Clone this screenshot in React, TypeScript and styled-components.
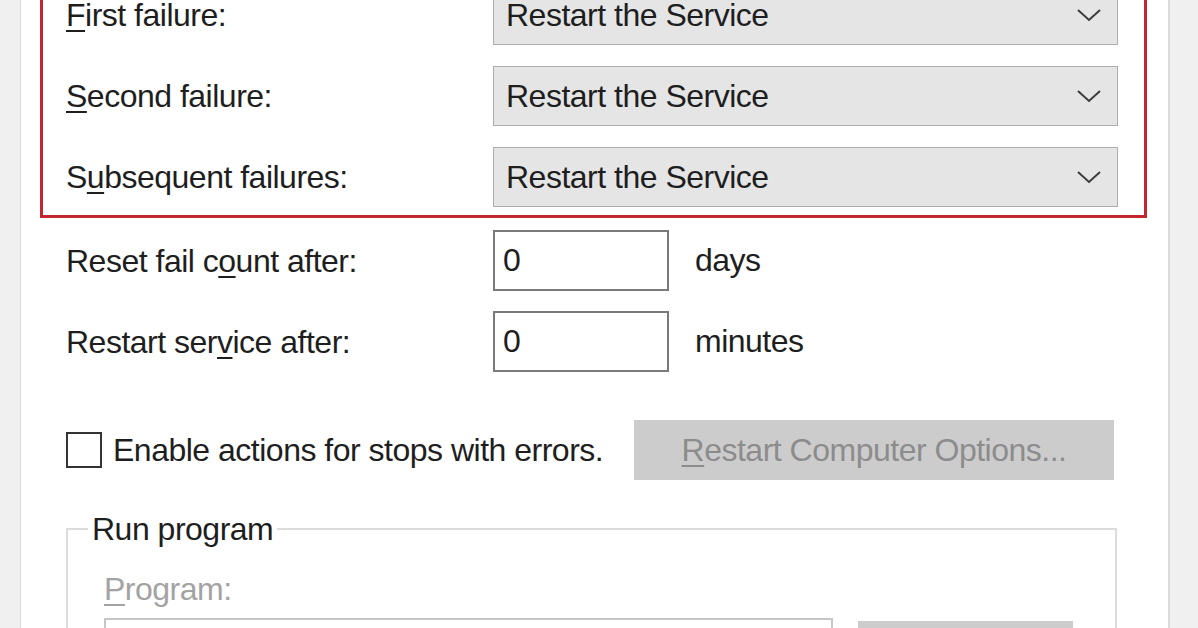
import styled, { createGlobalStyle } from "styled-components";

const GlobalStyle = createGlobalStyle`
    html, body {
        margin: 0;
        padding: 0;
        background: #f0f0f0;
    }
    body {
        font-family: "Liberation Sans", Arial, sans-serif;
        color: #1e1e1e;
    }
`;

const Screen = styled.div`
    width: 1198px;
    height: 628px;
    overflow: hidden;
    background: #f0f0f0;
`;

const TabPage = styled.div`
    margin-left: 20px;
    width: 1150px;
    min-height: 720px;
    box-sizing: border-box;
    background: #fff;
    border-left: 1px solid #d9d9d9;
    border-right: 2px solid #dadada;
    padding: 0 21px 0 19px;
    font-size: 32px;
    letter-spacing: -0.5px;
`;

const RedBox = styled.div`
    margin-top: -30px;
    border: 3px solid #c4262e;
    padding: 12px 26px 8px 23px;
    display: flex;
    flex-direction: column;
    gap: 21px;
`;

const FailureRow = styled.div`
    display: grid;
    grid-template-columns: 427px 1fr;
    align-items: center;
`;

const Label = styled.span<{ $disabled?: boolean }>`
    color: ${(p) => (p.$disabled ? "#a3a3a3" : "#1e1e1e")};
    line-height: 36px;
    white-space: nowrap;
    u {
        text-underline-offset: 4px;
        text-decoration-thickness: 2px;
    }
`;

const Select = styled.div`
    height: 60px;
    box-sizing: border-box;
    border: 1px solid #adadad;
    background: #e5e5e5;
    display: flex;
    align-items: center;
    justify-content: space-between;
    padding: 0 15px 0 12px;
`;

const Settings = styled.div`
    padding-left: 26px;
    padding-top: 12px;
    display: flex;
    flex-direction: column;
    gap: 20px;
`;

const SettingRow = styled.div`
    display: flex;
    align-items: center;
`;

const SettingLabel = styled(Label)`
    width: 427px;
`;

const NumberBox = styled.div`
    width: 176px;
    height: 61px;
    box-sizing: border-box;
    border: 2px solid #7a7a7a;
    padding-left: 8px;
    display: flex;
    align-items: center;
`;

const Unit = styled.span`
    margin-left: 26px;
`;

const OptionsRow = styled.div`
    margin-top: 28px;
    display: flex;
    align-items: center;
`;

const CheckBox = styled.div`
    width: 36px;
    height: 36px;
    box-sizing: border-box;
    border: 2px solid #333;
    background: #fff;
    flex-shrink: 0;
`;

const CheckLabel = styled(Label)`
    margin-left: 11px;
`;

const GrayButton = styled.div<{ $width: number }>`
    width: ${(p) => p.$width}px;
    height: 60px;
    box-sizing: border-box;
    background: #cccccc;
    color: #8c8c8c;
    display: flex;
    align-items: center;
    justify-content: center;
    flex-shrink: 0;
    u {
        text-underline-offset: 4px;
        text-decoration-thickness: 2px;
    }
`;

const OptionsButton = styled(GrayButton)`
    margin-left: auto;
    margin-right: 33px;
`;

const Group = styled.fieldset`
    margin: 11px 30px 0 0;
    padding: 0 0 40px 36px;
    border: 2px solid #dcdcdc;
    min-width: 0;
`;

const Legend = styled.legend`
    margin-left: -16px;
    padding: 0 4px;
    line-height: 36px;
    color: #1e1e1e;
`;

const ProgramLabel = styled(Label)`
    display: block;
    margin-top: 24px;
`;

const ProgramRow = styled.div`
    margin-top: 11px;
    display: flex;
    align-items: flex-start;
`;

const PathBox = styled.div`
    width: 729px;
    height: 60px;
    box-sizing: border-box;
    border: 2px solid #c6c6c6;
    background: #fff;
`;

const BrowseButton = styled(GrayButton)`
    margin-left: 25px;
    margin-top: 3px;
`;

function Chevron() {
    return (
        <svg width="26" height="16" viewBox="0 0 26 16">
            <polyline points="2,3 13,13 24,3" fill="none" stroke="#3c3c3c" strokeWidth="2" />
        </svg>
    );
}

const failures = [
    { key: "F", rest: "irst failure:" },
    { key: "S", rest: "econd failure:" },
    { key: "u", pre: "S", rest: "bsequent failures:" },
];

function App() {
    return (
        <>
            <GlobalStyle />
            <Screen>
                <TabPage>
                    <RedBox>
                        {failures.map((f) => (
                            <FailureRow key={f.rest}>
                                <Label>
                                    {f.pre}
                                    <u>{f.key}</u>
                                    {f.rest}
                                </Label>
                                <Select>
                                    <span>Restart the Service</span>
                                    <Chevron />
                                </Select>
                            </FailureRow>
                        ))}
                    </RedBox>
                    <Settings>
                        <SettingRow>
                            <SettingLabel>
                                Reset fail c<u>o</u>unt after:
                            </SettingLabel>
                            <NumberBox>0</NumberBox>
                            <Unit>days</Unit>
                        </SettingRow>
                        <SettingRow>
                            <SettingLabel>
                                Restart ser<u>v</u>ice after:
                            </SettingLabel>
                            <NumberBox>0</NumberBox>
                            <Unit>minutes</Unit>
                        </SettingRow>
                        <OptionsRow>
                            <CheckBox />
                            <CheckLabel>Enable actions for stops with errors.</CheckLabel>
                            <OptionsButton $width={480}>
                                <span>
                                    <u>R</u>estart Computer Options...
                                </span>
                            </OptionsButton>
                        </OptionsRow>
                        <Group>
                            <Legend>Run program</Legend>
                            <ProgramLabel $disabled>
                                <u>P</u>rogram:
                            </ProgramLabel>
                            <ProgramRow>
                                <PathBox />
                                <BrowseButton $width={215}>
                                    <span>
                                        <u>B</u>rowse...
                                    </span>
                                </BrowseButton>
                            </ProgramRow>
                        </Group>
                    </Settings>
                </TabPage>
            </Screen>
        </>
    );
}

export default App;
